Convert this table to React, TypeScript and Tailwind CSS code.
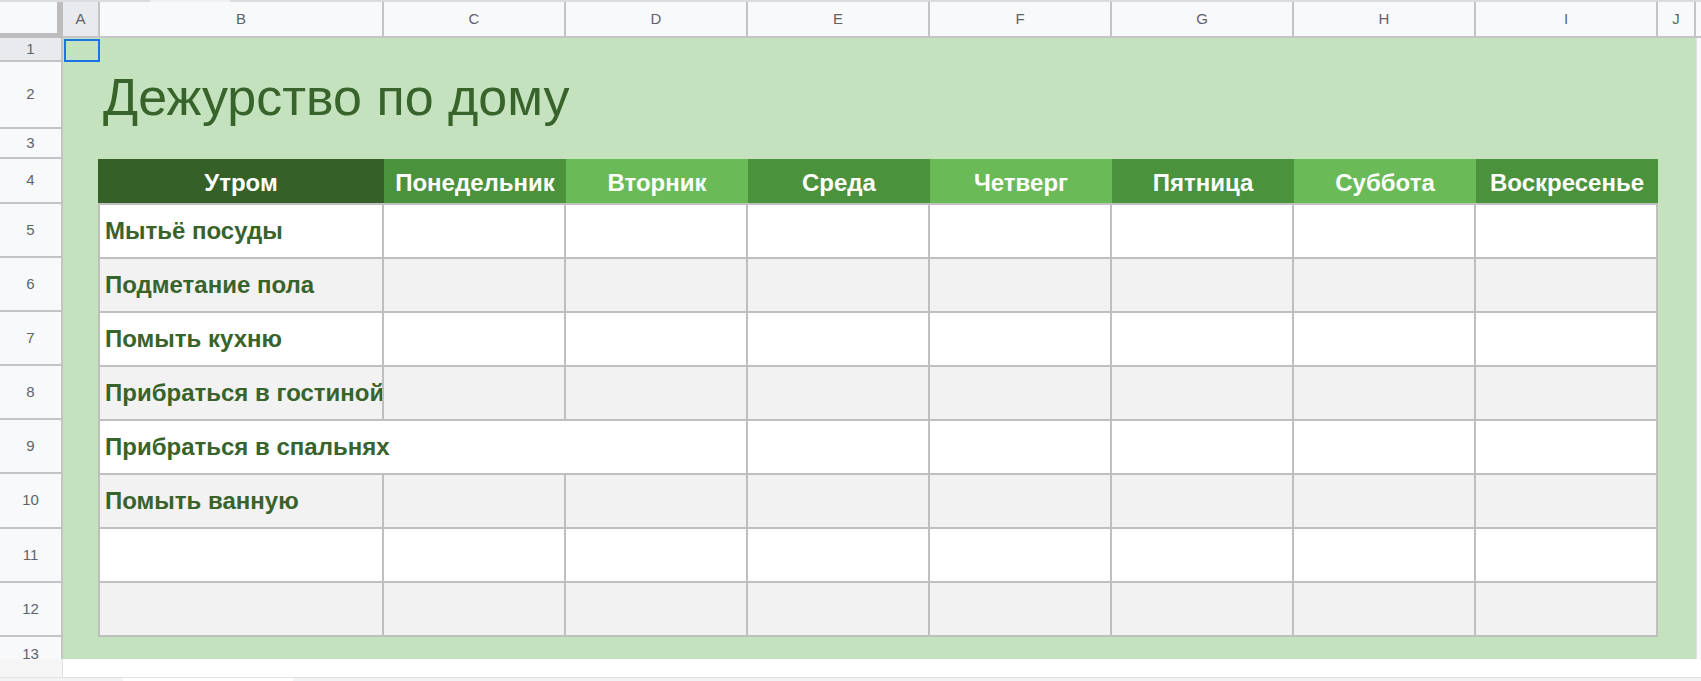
import React from 'react';

const COLS = [
  { l: 'A', w: 'w-[37px]' },
  { l: 'B', w: 'w-[284px]' },
  { l: 'C', w: 'w-[182px]' },
  { l: 'D', w: 'w-[182px]' },
  { l: 'E', w: 'w-[182px]' },
  { l: 'F', w: 'w-[182px]' },
  { l: 'G', w: 'w-[182px]' },
  { l: 'H', w: 'w-[182px]' },
  { l: 'I', w: 'w-[182px]' },
  { l: 'J', w: 'w-[38px]' },
];

const ROW_HEIGHTS = [
  'h-[24px]', 'h-[67px]', 'h-[30px]', 'h-[45px]', 'h-[54px]', 'h-[54px]', 'h-[54px]',
  'h-[54px]', 'h-[54px]', 'h-[55px]', 'h-[54px]', 'h-[54px]',
];

const HEADERS = [
  { t: 'Утром', bg: 'bg-[#356129]' },
  { t: 'Понедельник', bg: 'bg-[#4b923c]' },
  { t: 'Вторник', bg: 'bg-[#6aba58]' },
  { t: 'Среда', bg: 'bg-[#4b923c]' },
  { t: 'Четверг', bg: 'bg-[#6aba58]' },
  { t: 'Пятница', bg: 'bg-[#4b923c]' },
  { t: 'Суббота', bg: 'bg-[#6aba58]' },
  { t: 'Воскресенье', bg: 'bg-[#4b923c]' },
];

const CHORES = [
  'Мытьё посуды',
  'Подметание пола',
  'Помыть кухню',
  'Прибраться в гостиной',
  'Прибраться в спальнях',
  'Помыть ванную',
  '',
  '',
];

function ChoreRow({ label, index }: { label: string; index: number }) {
  const bg = index % 2 === 0 ? 'bg-white' : 'bg-[#f2f2f2]';
  const h = index === 0 ? 'h-[56px] border-t-2' : 'h-[54px]';
  // B9 text spills into the empty C9 cell, so the divider is hidden
  const overflow = label === 'Прибраться в спальнях';
  const cell = `${bg} ${h} border-b-2 border-[#bfbfbf]`;
  return (
    <>
      <div
        className={`${cell} border-l-2 ${overflow ? 'col-span-2' : 'border-r-2'} flex items-center pl-[5px] overflow-hidden whitespace-nowrap text-[24px] font-bold text-[#38632b]`}
      >
        {label}
      </div>
      {Array.from({ length: overflow ? 6 : 7 }).map((_, i) => (
        <div key={i} className={`${cell} border-r-2`} />
      ))}
    </>
  );
}

export default function App() {
  return (
    <div className="w-[1701px] h-[681px] overflow-hidden bg-white font-['Liberation_Sans',Arial,sans-serif] flex flex-col">
      {/* toolbar edge */}
      <div className="h-[2px] flex bg-[#dadce0]">
        <div className="w-[150px]" />
        <div className="w-[80px] bg-[#eef0f2]" />
      </div>

      {/* column letters */}
      <div className="h-[36px] flex">
        <div className="w-[57px] bg-[#f8f9fa] border-b-[5px] border-[#bdbdbd]" />
        <div className="w-[6px] bg-[#bdbdbd]" />
        {COLS.map((c) => (
          <div
            key={c.l}
            className={`${c.w} ${c.l === 'A' ? 'bg-[#e8eaed]' : 'bg-[#f8f9fa]'} border-r-2 border-b-2 border-[#c4c4c4] flex items-center justify-center text-[15px] text-[#5f6368]`}
          >
            {c.l}
          </div>
        ))}
        <div className="flex-1 bg-[#f8f9fa] border-b-2 border-[#c4c4c4]" />
      </div>

      <div className="flex h-[621px]">
        {/* row numbers */}
        <div className="w-[63px] flex flex-col bg-[#f8f9fa] border-r-2 border-[#c4c4c4]">
          {ROW_HEIGHTS.map((h, i) => (
            <div
              key={i}
              className={`${h} ${i === 0 ? 'bg-[#e8eaed]' : ''} border-b-2 border-[#c4c4c4] flex items-center justify-center text-[15px] text-[#5f6368]`}
            >
              {i + 1}
            </div>
          ))}
          <div className="h-[22px] overflow-hidden flex justify-center pt-[8px] text-[15px] leading-[17px] text-[#5f6368]">
            13
          </div>
        </div>

        {/* sheet body */}
        <div className="w-[1633px] bg-[#c5e2bf] flex flex-col">
          <div className="h-[24px] pt-[1px] pl-[1px]">
            <div className="w-[36px] h-[23px] border-2 border-[#1a73e8]" />
          </div>
          <div className="h-[67px] flex items-end pl-[40px] pb-[2px]">
            <div className="text-[52px] leading-[60px] text-[#38632b]">Дежурство по дому</div>
          </div>
          <div className="h-[30px]" />

          <div className="pl-[35px] grid grid-cols-[286px_repeat(7,182px)]">
            {HEADERS.map((h) => (
              <div
                key={h.t}
                className={`${h.bg} h-[44px] flex items-center justify-center pt-[3px] text-[24px] font-bold text-white`}
              >
                {h.t}
              </div>
            ))}
            {CHORES.map((c, i) => (
              <ChoreRow key={i} label={c} index={i} />
            ))}
          </div>
        </div>

        <div className="flex-1 bg-[#f8f9fa] border-l border-[#e0e0e0]" />
      </div>

      {/* bottom strip */}
      <div className="h-[18px] flex">
        <div className="w-[63px] bg-[#f5f5f5] border-r border-[#e0e0e0]" />
        <div className="flex-1 bg-white" />
      </div>
      <div className="flex-1 flex bg-[#f1f3f4] border-t border-[#e3e3e3]">
        <div className="w-[123px]" />
        <div className="w-[170px] bg-white" />
      </div>
    </div>
  );
}
